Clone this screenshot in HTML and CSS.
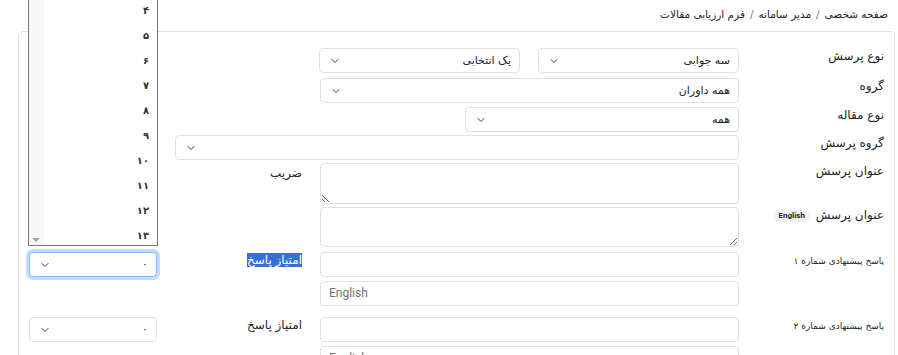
FILE: index.html
```html
<!DOCTYPE html>
<html lang="fa" dir="rtl">
<head>
    <meta charset="UTF-8">
    <meta name="viewport" content="width=device-width, initial-scale=1.0">
    <title>فرم ارزیابی مقالات</title>
    <link rel="stylesheet" href="styles.css">
</head>
<body>
    <nav class="breadcrumb">
        <a href="#">صفحه شخصی</a>
        <span class="sep">/</span>
        <a href="#">مدیر سامانه</a>
        <span class="sep">/</span>
        <span>فرم ارزیابی مقالات</span>
    </nav>

    <div class="card">
        <div class="row gap5">
            <label class="lbl">نوع پرسش</label>
            <div class="ctrls">
                <select class="sel w-201"><option>سه جوابی</option></select>
                <select class="sel w-201"><option>یک انتخابی</option></select>
            </div>
        </div>

        <div class="row">
            <label class="lbl">گروه</label>
            <select class="sel w-419"><option>همه داوران</option></select>
        </div>

        <div class="row gap3">
            <label class="lbl">نوع مقاله</label>
            <select class="sel w-274"><option>همه</option></select>
        </div>

        <div class="row gap3">
            <label class="lbl">گروه پرسش</label>
            <select class="sel w-564"><option></option></select>
        </div>

        <div class="row gap3">
            <label class="lbl">عنوان پرسش</label>
            <textarea class="area tall"></textarea>
            <label class="lbl2">ضریب</label>
        </div>

        <div class="row gap5">
            <label class="lbl">عنوان پرسش <span class="badge">English</span></label>
            <textarea class="area" dir="ltr"></textarea>
        </div>

        <!-- پاسخ ها -->
        <div class="row answer">
            <label class="lbl small">پاسخ پیشنهادی شماره ۱</label>
            <div class="stack">
                <input class="inp" type="text">
                <input class="inp" type="text" dir="ltr" placeholder="English">
            </div>
            <label class="lbl2"><span class="picked">امتیاز پاسخ</span></label>
            <div class="score">
                <select class="sel score-sel focused"><option>۰</option></select>
                <div class="droplist">
                    <ul class="items">
                        <li>۴</li>
                        <li>۵</li>
                        <li>۶</li>
                        <li>۷</li>
                        <li>۸</li>
                        <li>۹</li>
                        <li>۱۰</li>
                        <li>۱۱</li>
                        <li>۱۲</li>
                        <li>۱۳</li>
                    </ul>
                    <div class="scrollbar"><span class="arrow"></span></div>
                </div>
            </div>
        </div>

        <div class="row answer">
            <label class="lbl small">پاسخ پیشنهادی شماره ۲</label>
            <div class="stack">
                <input class="inp" type="text">
                <input class="inp" type="text" dir="ltr" placeholder="English">
            </div>
            <label class="lbl2">امتیاز پاسخ</label>
            <div class="score">
                <select class="sel score-sel"><option>۰</option></select>
            </div>
        </div>
    </div>
</body>
</html>
```

FILE: styles.css
```css
html {
    direction: rtl;
}

body {
    margin: 0;
    padding: 0;
    font-family: Tahoma, "DejaVu Sans", sans-serif;
    font-size: 12px;
    color: #212529;
    background: #fff;
}

/* مسیر صفحه */
.breadcrumb {
    display: flex;
    align-items: center;
    gap: 5px;
    height: 28px;
    padding: 0 10px;
    font-size: 10.5px;
}

.breadcrumb a {
    color: #212529;
    text-decoration: none;
}

.breadcrumb .sep {
    color: #6c757d;
}

.card {
    margin: 3px 3px 0 18px;
    padding: 16px 10px 0 10px;
    border: 1px solid #dee2e6;
    border-radius: 5px;
    height: 400px;
}

.row {
    display: flex;
    align-items: flex-start;
    gap: 6px;
    margin-bottom: 4px;
}

.row.gap3 { margin-bottom: 3px; }
.row.gap5 { margin-bottom: 5px; }

.lbl {
    width: 139px;
    flex: none;
    padding-top: 0;
    line-height: 16px;
}

.lbl.small {
    font-size: 9px;
    padding-top: 1px;
}

.badge {
    display: inline-block;
    margin-right: 3px;
    padding: 1px 4px;
    font-family: Roboto, "Liberation Sans", sans-serif;
    font-size: 8px;
    font-weight: bold;
    line-height: 10px;
    background: #eef0f2;
    border-radius: 3px;
    vertical-align: 1px;
}

.ctrls {
    display: flex;
    gap: 18px;
}

.sel,
.inp,
.area {
    box-sizing: border-box;
    flex: none;
    height: 25px;
    margin: 0;
    border: 1px solid #dee2e6;
    border-radius: 4px;
    background-color: #fff;
    font-family: inherit;
    font-size: 11px;
    color: #212529;
}

.sel {
    appearance: none;
    padding: 0 8px 0 28px;
    background-image: url("data:image/svg+xml,%3csvg xmlns='http://www.w3.org/2000/svg' viewBox='0 0 16 16'%3e%3cpath fill='none' stroke='%23343a40' stroke-linecap='round' stroke-linejoin='round' stroke-width='2' d='m2 5 6 6 6-6'/%3e%3c/svg%3e");
    background-repeat: no-repeat;
    background-position: left 10px center;
    background-size: 10px 8px;
}

.w-201 { width: 201px; }
.w-274 { width: 274px; }
.w-419 { width: 419px; }
.w-564 { width: 564px; }

.area {
    width: 419px;
    height: 40px;
    resize: vertical;
}

.area.tall {
    height: 41px;
}

.lbl2 {
    margin-right: 12px;
    padding-top: 2px;
    line-height: 16px;
}

.answer {
    margin-bottom: 11px;
}

.answer .lbl2 {
    width: 139px;
    flex: none;
    padding-top: 0;
}

.stack {
    width: 419px;
    flex: none;
    display: flex;
    flex-direction: column;
    gap: 4px;
}

.inp {
    width: 100%;
    padding: 0 8px;
}

.inp::placeholder {
    font-family: Roboto, "Liberation Sans", sans-serif;
    font-size: 12px;
    color: #6c757d;
}

.picked {
    background: #3a70d6;
    color: #fff;
}

.score {
    position: relative;
    width: 128px;
    flex: none;
    margin-right: auto;
}

.score-sel {
    width: 100%;
}

.score-sel.focused {
    border-color: #86b7fe;
    box-shadow: 0 0 0 3px rgba(13, 110, 253, 0.25);
    outline: none;
}

/* لیست باز شده */
.droplist {
    position: absolute;
    bottom: calc(100% + 6px);
    left: -1px;
    right: -1px;
    height: 270px;
    display: flex;
    background: #fff;
    border: 1px solid #767676;
    overflow: hidden;
}

.scrollbar {
    position: relative;
    width: 15px;
    flex: none;
    background: #f7f7f7;
}

.arrow {
    position: absolute;
    bottom: 3px;
    left: 3px;
    border-left: 4px solid transparent;
    border-right: 4px solid transparent;
    border-top: 4px solid #a3a3a3;
}

.items {
    flex: 1;
    list-style: none;
    margin: 0 0 -3px 0;
    padding: 0;
    display: flex;
    flex-direction: column;
    justify-content: flex-end;
}

.items li {
    height: 25px;
    line-height: 25px;
    padding-right: 8px;
    font-size: 10px;
    font-weight: bold;
    color: #333;
}
```
